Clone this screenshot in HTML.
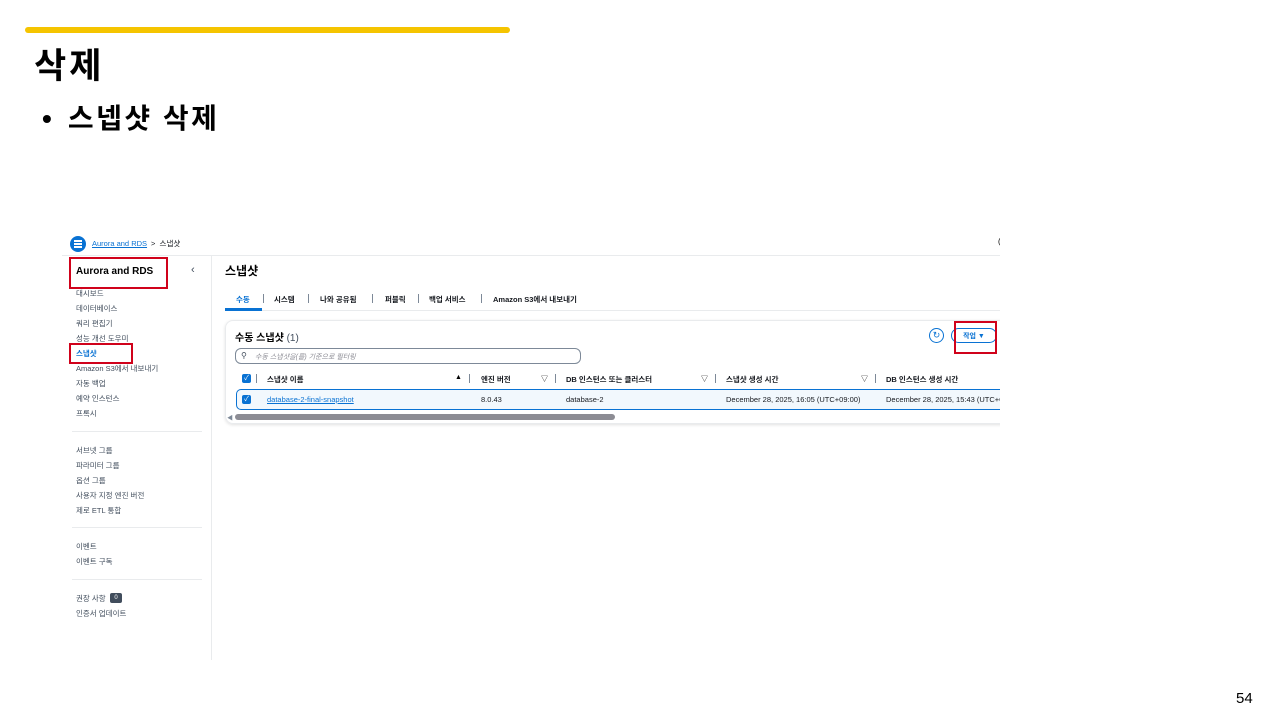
<!DOCTYPE html>
<html><head><meta charset="utf-8"><style>
*{margin:0;padding:0;box-sizing:border-box}
body{width:1280px;height:720px;background:#fff;position:relative;overflow:hidden;font-family:"Liberation Sans","Noto Sans CJK KR",sans-serif;color:#000}
.a{position:absolute;white-space:nowrap}
.s{font-size:7.5px;color:#16191f}
.nav{font-size:7.5px;color:#414d5c}
.red{position:absolute;border:2.5px solid #d0021b}
.th{font-size:7.5px;font-weight:bold;color:#16191f}
.tb{font-size:7.5px;color:#16191f}
.cb{position:absolute;width:9px;height:9px;background:#0972d3;border-radius:2px;color:#fff;font-size:7px;line-height:9px;text-align:center}
.sep{position:absolute;width:1px;height:9px;background:#7d8998}
</style></head><body>
<div class="a" style="left:25px;top:27px;width:485px;height:6px;background:#f5c400;border-radius:3px"></div>
<div class="a" style="left:34px;top:38px;font-size:35px;font-weight:bold;letter-spacing:3px">삭제</div>
<div class="a" style="left:42px;top:97px;font-size:28px;font-weight:bold">•<span style="margin-left:16px;letter-spacing:2.5px">스넵샷 삭제</span></div>
<div class="a" style="left:1236px;top:690px;font-size:15px">54</div>

<div class="a" style="left:62px;top:255px;width:938px;height:1px;background:#e9ebed"></div>
<div class="a" style="left:70px;top:236px;width:16px;height:16px;border-radius:50%;background:#0972d3"></div>
<div class="a" style="left:74px;top:240px;width:8px;height:1.5px;background:#fff;box-shadow:0 3px 0 #fff,0 6px 0 #fff"></div>
<div class="a" style="left:92px;top:239px;font-size:7.5px;color:#0972d3;text-decoration:underline">Aurora and RDS</div>
<div class="a s" style="left:151px;top:238px">&gt;&nbsp; 스냅샷</div>
<div class="a" style="left:998px;top:237px;font-size:8px">(</div>

<div class="a" style="left:211px;top:256px;width:1px;height:404px;background:#e9ebed"></div>
<div class="a" style="left:76px;top:266px;font-size:10px;font-weight:bold">Aurora and RDS</div>
<div class="a" style="left:191px;top:264px;font-size:11px;color:#414d5c">‹</div>
<div class="red" style="left:69px;top:257px;width:99px;height:32px"></div>
<div class="a nav" style="left:76px;top:288px">대시보드</div>
<div class="a nav" style="left:76px;top:303px">데이터베이스</div>
<div class="a nav" style="left:76px;top:318px">쿼리 편집기</div>
<div class="a nav" style="left:76px;top:333px">성능 개선 도우미</div>
<div class="a" style="left:76px;top:348px;font-size:7.5px;font-weight:bold;color:#0972d3">스냅샷</div>
<div class="red" style="left:69px;top:343px;width:64px;height:21px"></div>
<div class="a nav" style="left:76px;top:363px">Amazon S3에서 내보내기</div>
<div class="a nav" style="left:76px;top:378px">자동 백업</div>
<div class="a nav" style="left:76px;top:393px">예약 인스턴스</div>
<div class="a nav" style="left:76px;top:408px">프록시</div>
<div class="a" style="left:72px;top:431px;width:130px;height:1px;background:#e9ebed"></div>
<div class="a nav" style="left:76px;top:445px">서브넷 그룹</div>
<div class="a nav" style="left:76px;top:460px">파라미터 그룹</div>
<div class="a nav" style="left:76px;top:475px">옵션 그룹</div>
<div class="a nav" style="left:76px;top:490px">사용자 지정 엔진 버전</div>
<div class="a nav" style="left:76px;top:505px">제로 ETL 통합</div>
<div class="a" style="left:72px;top:527px;width:130px;height:1px;background:#e9ebed"></div>
<div class="a nav" style="left:76px;top:541px">이벤트</div>
<div class="a nav" style="left:76px;top:556px">이벤트 구독</div>
<div class="a" style="left:72px;top:579px;width:130px;height:1px;background:#e9ebed"></div>
<div class="a nav" style="left:76px;top:593px">권장 사항</div>
<div class="a" style="left:110px;top:593px;width:12px;height:10px;background:#414d5c;color:#fff;font-size:6px;text-align:center;line-height:10px;border-radius:2px">0</div>
<div class="a nav" style="left:76px;top:608px">인증서 업데이트</div>

<div class="a" style="left:225px;top:262px;font-size:12px;font-weight:bold">스냅샷</div>
<div class="a" style="left:225px;top:310px;width:775px;height:1px;background:#e9ebed"></div>
<div class="a" style="left:225px;top:308px;width:37px;height:3px;background:#0972d3"></div>
<div class="a" style="left:236px;top:294px;font-size:7.5px;font-weight:bold;color:#0972d3">수동</div>
<div class="sep" style="left:263px;top:294px"></div>
<div class="a th" style="left:274px;top:294px">시스템</div>
<div class="sep" style="left:308px;top:294px"></div>
<div class="a th" style="left:320px;top:294px">나와 공유됨</div>
<div class="sep" style="left:372px;top:294px"></div>
<div class="a th" style="left:385px;top:294px">퍼블릭</div>
<div class="sep" style="left:418px;top:294px"></div>
<div class="a th" style="left:429px;top:294px">백업 서비스</div>
<div class="sep" style="left:481px;top:294px"></div>
<div class="a th" style="left:493px;top:294px">Amazon S3에서 내보내기</div>

<div class="a" style="left:225px;top:320px;width:790px;height:104px;border:1px solid #e9ebed;border-radius:8px;box-shadow:0 1px 3px rgba(0,0,0,.12)"></div>
<div class="a" style="left:235px;top:329px;font-size:10px;font-weight:bold">수동 스냅샷 <span style="font-weight:normal;color:#414d5c">(1)</span></div>
<div class="a" style="left:929px;top:328px;width:15px;height:15px;border:1.5px solid #0972d3;border-radius:50%;color:#0972d3;font-size:9px;display:flex;align-items:center;justify-content:center">↻</div>
<div class="a" style="left:951px;top:328px;width:46px;height:15px;border:1.5px solid #0972d3;border-radius:8px;color:#0972d3;font-size:7px;font-weight:bold;display:flex;align-items:center;justify-content:center">작업 ▼</div>
<div class="red" style="left:954px;top:321px;width:43px;height:33px"></div>
<div class="a" style="left:235px;top:348px;width:346px;height:16px;border:1px solid #7d8998;border-radius:6px"></div>
<div class="a" style="left:241px;top:351px;font-size:8px;color:#414d5c">⚲</div>
<div class="a" style="left:255px;top:352px;font-size:7px;font-style:italic;color:#8c8c94">수동 스냅샷을(를) 기준으로 필터링</div>

<div class="cb" style="left:242px;top:374px">✓</div>
<div class="sep" style="left:256px;top:374px"></div>
<div class="a th" style="left:267px;top:374px">스냅샷 이름</div>
<div class="a" style="left:455px;top:374px;font-size:7px">▲</div>
<div class="sep" style="left:469px;top:374px"></div>
<div class="a th" style="left:481px;top:374px">엔진 버전</div>
<div class="a" style="left:541px;top:374px;font-size:7px">▽</div>
<div class="sep" style="left:555px;top:374px"></div>
<div class="a th" style="left:566px;top:374px">DB 인스턴스 또는 클러스터</div>
<div class="a" style="left:701px;top:374px;font-size:7px">▽</div>
<div class="sep" style="left:715px;top:374px"></div>
<div class="a th" style="left:726px;top:374px">스냅샷 생성 시간</div>
<div class="a" style="left:861px;top:374px;font-size:7px">▽</div>
<div class="sep" style="left:875px;top:374px"></div>
<div class="a th" style="left:886px;top:374px">DB 인스턴스 생성 시간</div>

<div class="a" style="left:236px;top:389px;width:780px;height:21px;border:1px solid #0972d3;border-radius:5px;background:#f2f8fd"></div>
<div class="cb" style="left:242px;top:395px">✓</div>
<div class="a" style="left:267px;top:395px;font-size:7.5px;color:#0972d3;text-decoration:underline">database-2-final-snapshot</div>
<div class="a tb" style="left:481px;top:395px">8.0.43</div>
<div class="a tb" style="left:566px;top:395px">database-2</div>
<div class="a tb" style="left:726px;top:395px">December 28, 2025, 16:05 (UTC+09:00)</div>
<div class="a tb" style="left:886px;top:395px">December 28, 2025, 15:43 (UTC+C</div>
<div class="a" style="left:227px;top:413px;font-size:6px;color:#7d8998">◀</div>
<div class="a" style="left:235px;top:414px;width:380px;height:6px;border-radius:3px;background:#8c8c94"></div>
<div class="a" style="left:1000px;top:232px;width:280px;height:440px;background:#fff"></div>
</body></html>
